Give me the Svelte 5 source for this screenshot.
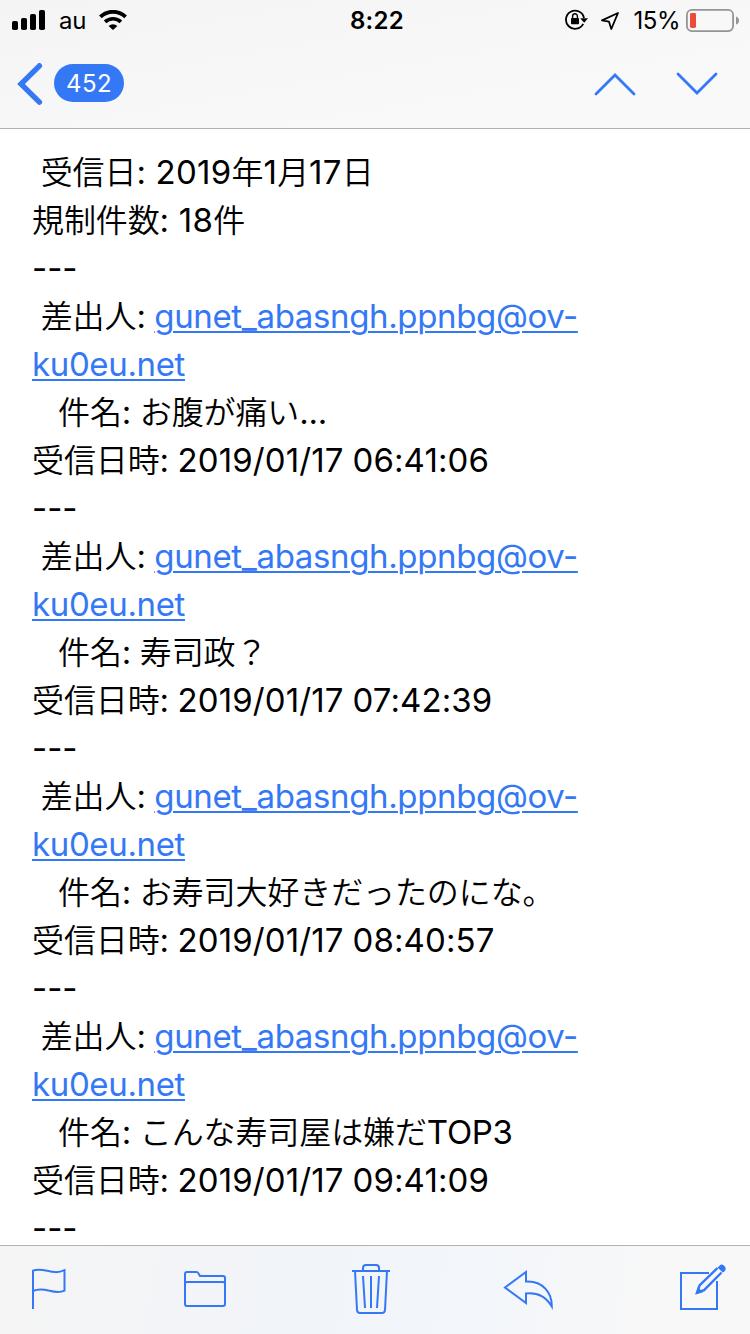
<script>
    let unread = $state(452);

    const summary = [' 受信日: 2019年1月17日', '規制件数: 18件'];
    const sender = 'gunet_abasngh.ppnbg@ov-ku0eu.net';

    const mails = [
        { subject: 'お腹が痛い...', date: '2019/01/17 06:41:06' },
        { subject: '寿司政？', date: '2019/01/17 07:42:39' },
        { subject: 'お寿司大好きだったのにな。', date: '2019/01/17 08:40:57' },
        { subject: 'こんな寿司屋は嫌だTOP3', date: '2019/01/17 09:41:09' }
    ];

    // japanese glyphs run a little smaller than the latin ones
    function runs(text) {
        return text
            .split(/([\u3000-\u9fff\uff00-\uffef]+)/)
            .filter((t) => t)
            .map((t) => ({ t, ja: /[\u3000-\u9fff\uff00-\uffef]/.test(t), num: /^[:\s\d]*\d$/.test(t) }));
    }
</script>

{#snippet line(text)}
    {#each runs(text) as r}<span class:ja={r.ja} class:num={r.num}>{r.t}</span>{/each}
{/snippet}

<div class="screen">
    <header>
        <div class="status">
            <div class="carrier">
                <svg width="34" height="20" viewBox="0 0 34 20">
                    <rect x="0" y="11" width="6" height="9" rx="1.8" />
                    <rect x="9" y="8" width="6" height="12" rx="1.8" />
                    <rect x="18" y="4" width="6" height="16" rx="1.8" />
                    <rect x="27" y="0" width="6" height="20" rx="1.8" />
                </svg>
                <span class="name">au</span>
                <svg width="28" height="20" viewBox="0 0 28 20">
                    <path d="M1.4 6.9a18 18 0 0 1 25.2 0" fill="none" stroke="#000" stroke-width="3.8" />
                    <path d="M6.1 11.9a11.4 11.4 0 0 1 15.8 0" fill="none" stroke="#000" stroke-width="3.6" />
                    <path d="M9.6 16a6.3 6.3 0 0 1 8.8 0L14 20z" />
                </svg>
            </div>
            <span class="time">8:22</span>
            <div class="power">
                <svg width="23" height="22" viewBox="0 0 23 22">
                    <path d="M18.2 14.8A9.1 9.1 0 1 1 19 9" fill="none" stroke="#000" stroke-width="1.8" />
                    <path d="M15.2 9.2h7.8l-3.8 4.6z" />
                    <rect x="6" y="9" width="8" height="6.2" rx="0.8" />
                    <path d="M7.6 9.5V7.2a2.4 2.4 0 0 1 4.8 0v2.3" fill="none" stroke="#000" stroke-width="1.4" />
                </svg>
                <svg class="arrow" width="20" height="20" viewBox="0 0 20 20">
                    <path d="M18 3L2 10.400l7 1.300L11.300 19z" fill="none" stroke="#000" stroke-width="1.8" stroke-linejoin="round" />
                </svg>
                <span class="percent">15%</span>
                <svg width="54" height="23" viewBox="0 0 54 23">
                    <rect x="0.9" y="0.9" width="46.2" height="21.2" rx="5" fill="none" stroke="#949494" stroke-width="1.8" />
                    <rect x="4" y="4" width="6" height="15" rx="1.4" fill="#eb4d3d" />
                    <path d="M50 7.5q3 1 3 4t-3 4z" fill="#949494" />
                </svg>
            </div>
        </div>

        <nav>
            <button class="back" aria-label="Back">
                <svg width="26" height="42" viewBox="0 0 26 42">
                    <path d="M22.4 2.8L4 21l18.4 18.2" stroke-width="5.4" stroke-linecap="round" />
                </svg>
                <span class="badge">{unread}</span>
            </button>
            <div class="pager">
                <button aria-label="Previous">
                    <svg width="42" height="24" viewBox="0 0 42 24">
                        <path d="M2 22L21 3l19 19" stroke-width="2.8" stroke-linecap="round" />
                    </svg>
                </button>
                <button aria-label="Next">
                    <svg width="42" height="24" viewBox="0 0 42 24">
                        <path d="M2 2l19 19L40 2" stroke-width="2.8" stroke-linecap="round" />
                    </svg>
                </button>
            </div>
        </nav>
    </header>

    <main>
        {#each summary as text}
            <p>{@render line(text)}</p>
        {/each}
        <p class="rule">---</p>
        {#each mails as mail}
            <p>{@render line(' 差出人: ')}<a href="mailto:{sender}">{sender}</a></p>
            <p>{@render line('   件名: ' + mail.subject)}</p>
            <p>{@render line('受信日時: ')}<span class="date">{mail.date}</span></p>
            <p class="rule">---</p>
        {/each}
    </main>

    <footer>
        <button aria-label="Flag">
            <svg width="42" height="50" viewBox="0 0 42 50">
                <path d="M1 45V6.600C12 2.500 20 12 32.500 6.200V26.600C22 32 13 21.500 1 27" />
            </svg>
        </button>
        <button aria-label="Move">
            <svg width="58" height="50" viewBox="0 0 58 50">
                <path d="M1 40V10q0-2 2-2h9.500q1.500 0 2.300 2l1.200 2H39q2 0 2 2v26q0 2-2 2H3q-2 0-2-2zM1 20q0-2 2-2H39q2 0 2 2" />
            </svg>
        </button>
        <button aria-label="Delete">
            <svg width="42" height="50" viewBox="0 0 42 50">
                <path d="M0 7h38M11 7V4q0-3 3-3h10q3 0 3 3v3M3 7l2 39q.2 3 3 3h22q2.800 0 3-3l2-39M11 12l2 32M19 12v32M27 12l-2 32" />
            </svg>
        </button>
        <button aria-label="Reply">
            <svg width="66" height="50" viewBox="0 0 66 50">
                <path d="M1 23.500L22 8v9.500C39 16.500 48 29 47.800 42.500 42 33 35 28.500 22 29.500V39z" />
            </svg>
        </button>
        <button aria-label="Compose">
            <svg width="46" height="50" viewBox="0 0 46 50">
                <path d="M29 9H1v36h36V17" />
                <path class="pencil" d="M37.500 4L19.500 21.500l-2.400 7 7-2.400L41.500 8.500" />
                <path class="solid" d="M15.500 30.500l2.300-7.500 5.200 5.200zM39 2.200q2.200-3 5.200-.4 3 3 .2 5.600l-1.500 1.200-5.400-5z" />
            </svg>
        </button>
    </footer>
</div>

<style>
    :global(body) {
        margin: 0;
        background: #fff;
    }

    .screen {
        width: 750px;
        height: 1334px;
        display: flex;
        flex-direction: column;
        overflow: hidden;
        background: #fff;
        color: #000;
        font-family: Inter, "Noto Sans CJK JP", sans-serif;
    }

    header {
        height: 128px;
        flex: none;
        border-bottom: 1px solid #b2b2b2;
        background: linear-gradient(170deg, #f4f4f4, #f9f9f9 75%);
    }

    .status {
        height: 40px;
        display: grid;
        grid-template-columns: 1fr auto 1fr;
        align-items: center;
        padding: 0 10px 0 12px;
        font-size: 24px;
    }

    .carrier,
    .power {
        display: flex;
        align-items: center;
    }

    .name {
        margin: 0 13px;
        letter-spacing: -0.2px;
    }

    .time {
        font-weight: 600;
        letter-spacing: 0.3px;
        margin-left: 2px;
    }

    .power {
        justify-content: flex-end;
    }

    .arrow {
        margin: 0 14px 0 12px;
    }

    .percent {
        margin-right: 6px;
        letter-spacing: -0.5px;
    }

    nav {
        height: 88px;
        display: flex;
        justify-content: space-between;
        align-items: center;
        padding: 0 32px 0 17px;
    }

    button {
        display: flex;
        align-items: center;
        border: none;
        background: none;
        padding: 0;
        font: inherit;
        cursor: pointer;
    }

    button svg {
        fill: none;
        stroke: #3478f6;
    }

    .badge {
        width: 70px;
        height: 38px;
        margin: -2px 0 0 11px;
        border-radius: 19px;
        background: #3478f6;
        color: #fff;
        font-size: 24px;
        line-height: 39px;
        letter-spacing: 0.4px;
        text-align: center;
    }

    .pager {
        display: flex;
        gap: 40px;
    }

    main {
        flex: 1;
        min-height: 0;
        overflow: hidden;
        padding: 19px 32px 0;
        font-size: 33px;
        letter-spacing: -0.3px;
        word-spacing: -0.3px;
    }

    p {
        margin: 0;
        line-height: 48px;
        white-space: pre-wrap;
    }

    .ja {
        font-family: "Noto Sans CJK JP", sans-serif;
        font-size: 32px;
        font-weight: 350;
        letter-spacing: -0.1px;
        line-height: 1;
    }

    .num {
        letter-spacing: 0.3px;
    }

    .date {
        letter-spacing: 0.1px;
    }

    .rule {
        letter-spacing: 0;
    }

    a {
        color: #3478f6;
        letter-spacing: -0.36px;
        text-decoration-thickness: 2px;
        text-underline-offset: 3px;
    }

    footer {
        height: 88px;
        flex: none;
        display: flex;
        gap: 110px;
        padding-left: 32px;
        border-top: 1px solid #b2b2b2;
        background: linear-gradient(100deg, #f5f5f5, #f1f4f9 40%, #f3f6fa 65%, #f8f8f8 88%);
    }

    footer button {
        align-items: flex-start;
        padding-top: 18px;
    }

    footer svg {
        stroke-width: 2;
        overflow: visible;
    }

    .pencil {
        stroke-width: 2.4;
    }

    .solid {
        fill: #3478f6;
        stroke: none;
    }
</style>
